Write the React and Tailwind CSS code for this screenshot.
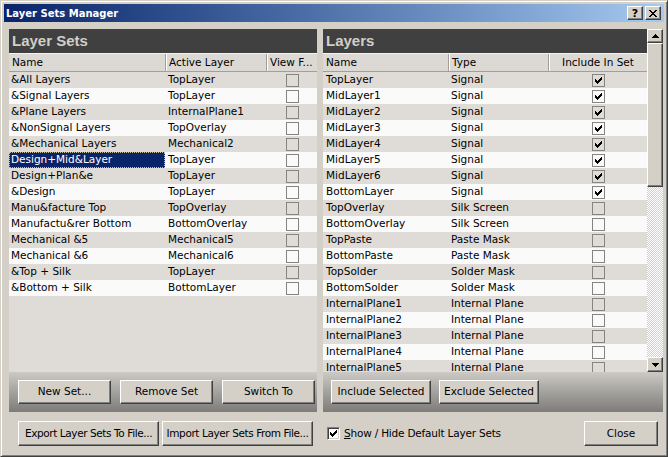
import React from 'react';

/**
 * Layer Sets Manager dialog (Windows classic look).
 */

const setRows = [
  ['&All Layers', 'TopLayer'],
  ['&Signal Layers', 'TopLayer'],
  ['&Plane Layers', 'InternalPlane1'],
  ['&NonSignal Layers', 'TopOverlay'],
  ['&Mechanical Layers', 'Mechanical2'],
  ['Design+Mid&Layer', 'TopLayer'],
  ['Design+Plan&e', 'TopLayer'],
  ['&Design', 'TopLayer'],
  ['Manu&facture Top', 'TopOverlay'],
  ['Manufactu&rer Bottom', 'BottomOverlay'],
  ['Mechanical &5', 'Mechanical5'],
  ['Mechanical &6', 'Mechanical6'],
  ['&Top + Silk', 'TopLayer'],
  ['&Bottom + Silk', 'BottomLayer'],
];

const layerRows = [
  ['TopLayer', 'Signal', true],
  ['MidLayer1', 'Signal', true],
  ['MidLayer2', 'Signal', true],
  ['MidLayer3', 'Signal', true],
  ['MidLayer4', 'Signal', true],
  ['MidLayer5', 'Signal', true],
  ['MidLayer6', 'Signal', true],
  ['BottomLayer', 'Signal', true],
  ['TopOverlay', 'Silk Screen', false],
  ['BottomOverlay', 'Silk Screen', false],
  ['TopPaste', 'Paste Mask', false],
  ['BottomPaste', 'Paste Mask', false],
  ['TopSolder', 'Solder Mask', false],
  ['BottomSolder', 'Solder Mask', false],
  ['InternalPlane1', 'Internal Plane', false],
  ['InternalPlane2', 'Internal Plane', false],
  ['InternalPlane3', 'Internal Plane', false],
  ['InternalPlane4', 'Internal Plane', false],
  ['InternalPlane5', 'Internal Plane', false],
];

// pixel pattern of the classic check mark
const TICK = [
  [6, 0], [5, 1], [6, 1], [0, 2], [4, 2], [5, 2], [6, 2], [0, 3], [1, 3], [3, 3], [4, 3], [5, 3],
  [0, 4], [1, 4], [2, 4], [3, 4], [4, 4], [1, 5], [2, 5], [3, 5], [2, 6],
];

function Tick() {
  return (
    <svg width="7" height="7" viewBox="0 0 7 7" shapeRendering="crispEdges">
      {TICK.map(([x, y]) => (
        <rect key={`${x}-${y}`} x={x} y={y} width="1" height="1" fill="#000" />
      ))}
    </svg>
  );
}

function Box({ checked }) {
  return (
    <span className="w-[13px] h-[13px] border border-[#868480] flex items-center justify-center shrink-0">
      {checked && <Tick />}
    </span>
  );
}

const raised =
  'bg-[#d4d0c8] border border-t-white border-l-white border-r-[#404040] border-b-[#404040] shadow-[inset_-1px_-1px_0_#808080]';

function Button({ children, className = '' }) {
  return (
    <button className={`${raised} flex items-center justify-center whitespace-nowrap text-[#000] ${className}`}>
      {children}
    </button>
  );
}

function Arrow({ up }) {
  return (
    <svg width="7" height="4" viewBox="0 0 7 4" shapeRendering="crispEdges">
      <path d={up ? 'M3 0h1v1h1v1h1v1h1v1H0V3h1V2h1V1h1z' : 'M0 0h7v1H6v1H5v1H4v1H3V3H2V2H1V1H0z'} fill="#000" />
    </svg>
  );
}

function PanelHeader({ title }) {
  return (
    <div className="h-[24px] bg-[#404040] flex items-center pl-[3px] shrink-0">
      <span className="font-['Liberation_Sans',sans-serif] font-bold text-[15px] text-[#d2cec8]">{title}</span>
    </div>
  );
}

function ColHeader({ cols }) {
  return (
    <div className="h-[19px] flex shrink-0 bg-[#dcd9d4] border-t border-t-[#f4f3f1] border-b border-b-[#a29f9a]">
      {cols.map(([label, w, center], i) => (
        <div
          key={label}
          className={`${w} flex items-center px-[3px] ${center ? 'justify-center' : ''} ${
            i < cols.length - 1 ? 'border-r border-r-[#a29f9a] shadow-[1px_0_0_#fff]' : ''
          }`}
        >
          {label}
        </div>
      ))}
    </div>
  );
}

export default function App() {
  return (
    <div className="w-[668px] h-[457px] bg-[#d4d0c8] border border-t-[#d4d0c8] border-l-[#d4d0c8] border-r-[#404040] border-b-[#404040] shadow-[inset_1px_1px_0_#fff,inset_-1px_-1px_0_#808080] p-[3px] flex flex-col font-['DejaVu_Sans',sans-serif] text-[10.5px] text-[#000] select-none">
      {/* title bar */}
      <div className="h-[18px] shrink-0 bg-gradient-to-r from-[#0a246a] to-[#a6caf0] flex items-center pl-[2px] pr-[3px]">
        <span className="text-white font-bold text-[10px] flex-1">Layer Sets Manager</span>
        <div className={`${raised} w-[16px] h-[14px] flex items-center justify-center font-bold text-[11px] leading-none`}>?</div>
        <div className={`${raised} w-[16px] h-[14px] ml-[2px] flex items-center justify-center`}>
          <svg width="8" height="7" viewBox="0 0 8 7" shapeRendering="crispEdges">
            <path d="M0 0h2v1h1v1h2V1h1V0h2v1H7v1H6v1H5v1h1v1h1v1h1v1H6V6H5V5H3v1H2v1H0V6h1V5h1V4h1V3H2V2H1V1H0z" fill="#000" />
          </svg>
        </div>
      </div>

      {/* panels */}
      <div className="flex mt-[7px] pl-[5px] gap-[6px] h-[383px] shrink-0">
        {/* Layer Sets */}
        <div className="w-[308px] flex flex-col bg-[#dfdcd7]">
          <PanelHeader title="Layer Sets" />
          <ColHeader cols={[['Name', 'w-[157px]'], ['Active Layer', 'w-[101px]'], ['View F...', 'flex-1']]} />
          <div className="flex flex-col">
            {setRows.map(([name, layer], i) => (
              <div key={name} className={`h-[16px] flex items-center ${i % 2 ? 'bg-[#fafafa]' : 'bg-[#dfdcd7]'}`}>
                <div
                  className={`w-[156px] h-full flex items-center px-[2px] ${
                    i === 5 ? 'bg-[#0a246a] text-white outline-1 outline-dotted outline-[#c8c0a0] -outline-offset-1' : ''
                  }`}
                >
                  {name}
                </div>
                <div className="w-[102px] pl-[3px]">{layer}</div>
                <div className="flex-1 flex justify-center">
                  <Box />
                </div>
              </div>
            ))}
          </div>
          <div className="flex-1" />
          <div className="h-[40px] shrink-0 bg-gradient-to-b from-[#cdcac5] to-[#7e7c79] flex items-start pt-[8px] pl-[9px] gap-[9px]">
            <Button className="w-[93px] h-[24px]">New Set...</Button>
            <Button className="w-[93px] h-[24px]">Remove Set</Button>
            <Button className="w-[93px] h-[24px]">Switch To</Button>
          </div>
        </div>

        {/* Layers */}
        <div className="w-[340px] flex flex-col">
          <div className="flex h-[343px] shrink-0">
            <div className="w-[324px] flex flex-col overflow-hidden bg-[#dfdcd7]">
              <PanelHeader title="Layers" />
              <ColHeader cols={[['Name', 'w-[126px]'], ['Type', 'w-[100px]'], ['Include In Set', 'flex-1', true]]} />
              {layerRows.map(([name, type, on], i) => (
                <div key={name} className={`h-[16px] shrink-0 flex items-center ${i % 2 ? 'bg-[#fafafa]' : 'bg-[#dfdcd7]'}`}>
                  <div className="w-[126px] pl-[3px]">{name}</div>
                  <div className="w-[100px] pl-[2px]">{type}</div>
                  <div className="flex-1 flex justify-center">
                    <Box checked={on} />
                  </div>
                </div>
              ))}
            </div>
            {/* scrollbar */}
            <div className="w-[16px] flex flex-col bg-[repeating-conic-gradient(#d4d0c8_0_25%,#ffffff_0_50%)] bg-[length:2px_2px]">
              <div className={`${raised} h-[14px] shrink-0 flex items-center justify-center`}>
                <Arrow up />
              </div>
              <div className={`${raised} h-[144px] shrink-0`} />
              <div className="flex-1" />
              <div className={`${raised} h-[15px] shrink-0 flex items-center justify-center`}>
                <Arrow />
              </div>
            </div>
          </div>
          <div className="h-[40px] shrink-0 bg-gradient-to-b from-[#cdcac5] to-[#7e7c79] flex items-start pt-[8px] pl-[8px] gap-[8px]">
            <Button className="w-[100px] h-[24px]">Include Selected</Button>
            <Button className="w-[100px] h-[24px]">Exclude Selected</Button>
          </div>
        </div>
      </div>

      {/* bottom row */}
      <div className="flex items-center mt-[9px] h-[25px] shrink-0 pl-[14px] pr-[6px]">
        <Button className="w-[141px] h-[25px] tracking-[-0.4px]">Export Layer Sets To File...</Button>
        <Button className="w-[151px] h-[25px] ml-[3px] tracking-[-0.4px]">Import Layer Sets From File...</Button>
        <span className="ml-[14px] w-[13px] h-[13px] bg-white border border-t-[#808080] border-l-[#808080] border-r-white border-b-white shadow-[inset_1px_1px_0_#404040,inset_-1px_-1px_0_#d4d0c8] flex items-center justify-center">
          <Tick />
        </span>
        <span className="ml-[4px] flex-1 tracking-[-0.2px]">
          <span className="underline">S</span>how / Hide Default Layer Sets
        </span>
        <Button className="w-[74px] h-[25px]">Close</Button>
      </div>
    </div>
  );
}
